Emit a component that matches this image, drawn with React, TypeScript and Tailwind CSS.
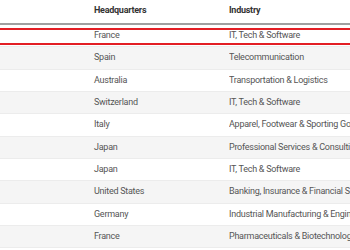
import React from "react";

const rows: [string, string][] = [
  ["France", "IT, Tech & Software"],
  ["Spain", "Telecommunication"],
  ["Australia", "Transportation & Logistics"],
  ["Switzerland", "IT, Tech & Software"],
  ["Italy", "Apparel, Footwear & Sporting Goods"],
  ["Japan", "Professional Services & Consulting"],
  ["Japan", "IT, Tech & Software"],
  ["United States", "Banking, Insurance & Financial Services"],
  ["Germany", "Industrial Manufacturing & Engineering"],
  ["France", "Pharmaceuticals & Biotechnology"],
];

export default function App() {
  return (
    <div
      className="relative w-[350px] h-[250px] overflow-hidden bg-white text-[9px] tracking-[-0.26px]"
      style={{ fontFamily: "Roboto, 'Liberation Sans', sans-serif" }}
    >
      <div className="flex h-[25px] items-end pb-[6px] border-b-2 border-[#a0a0a0] font-bold text-[#333] whitespace-nowrap">
        <div className="w-[94px] shrink-0" />
        <div className="w-[135px] shrink-0">Headquarters</div>
        <div className="flex-1">Industry</div>
      </div>
      {rows.map(([hq, ind], i) => (
        <div
          key={i}
          className={`flex h-[22.33px] items-center border-b border-[#ececec] text-[#555] whitespace-nowrap overflow-hidden ${
            i % 2 === 1 ? "bg-[#f5f5f5]" : "bg-white"
          }`}
        >
          <div className="w-[94px] shrink-0" />
          <div className="w-[135px] shrink-0">{hq}</div>
          <div className="flex-1 min-w-0 overflow-hidden">{ind}</div>
        </div>
      ))}
      <div className="absolute left-[-4px] right-[-4px] top-[28px] h-[17px] border-2 border-[#e31e24]" />
    </div>
  );
}
